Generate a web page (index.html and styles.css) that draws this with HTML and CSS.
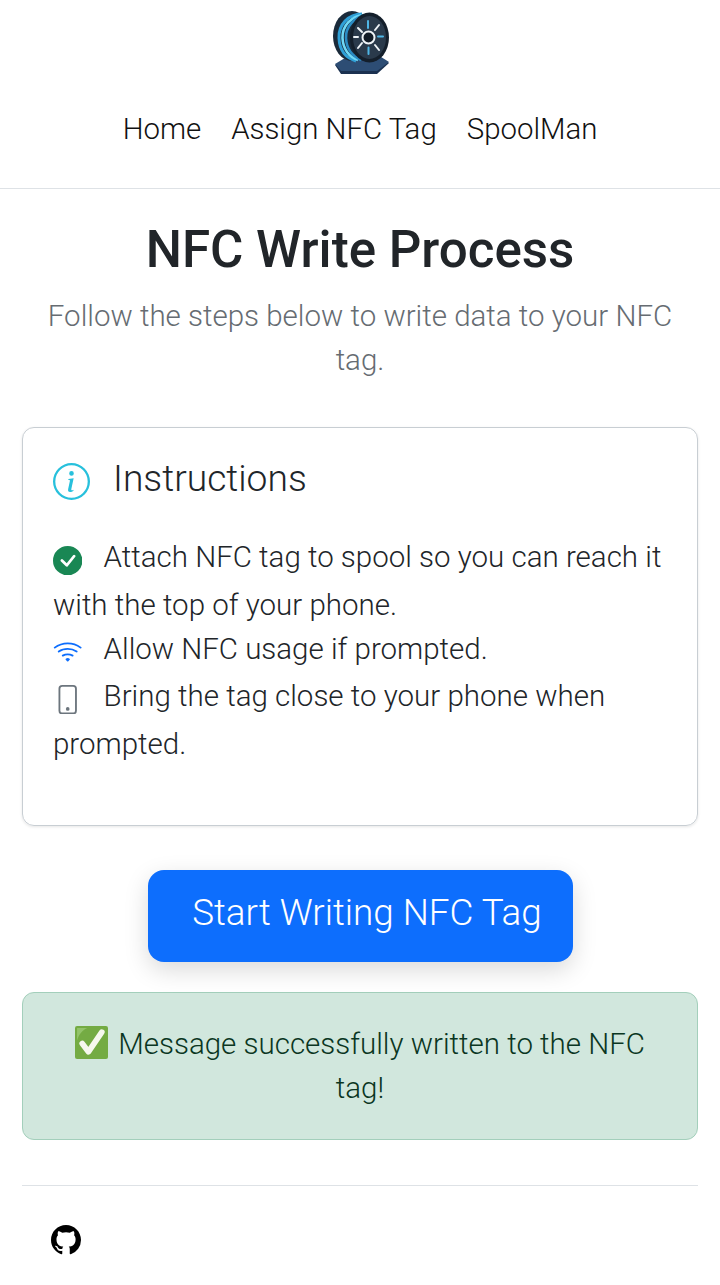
FILE: index.html
```html
<!DOCTYPE html>
<html lang="en">
<head>
  <meta charset="UTF-8" />
  <meta name="viewport" content="width=device-width, initial-scale=1.0"/>
  <title>NFC Write Process</title>
  <link rel="stylesheet" href="styles.css">
</head>
<body>

  <header class="site-header">
    <svg class="logo" viewBox="0 0 80 80" aria-hidden="true">
      <!-- stand -->
      <path d="M15 65 L30 56 H58 L69 63 L57 74 H21 Z" fill="#1b3150"/>
      <path d="M15 64 L30 55 H58 L69 62 L57 71 H21 Z" fill="#2d4d74"/>
      <!-- back flange and coils -->
      <ellipse cx="32" cy="36" rx="19" ry="25" fill="#1a2a3a"/>
      <path d="M42 14 C28 14 18.500 25 19 38 C19.500 50 26 58 36 61" fill="none" stroke="#2f9fd6" stroke-width="3"/>
      <path d="M44 15 C31 16 22 26 22.500 38 C23 49 29 57 38 60" fill="none" stroke="#6fd8f5" stroke-width="2.6"/>
      <path d="M46 15 C34 17 25.500 27 26 38 C26.500 48 32 56 41 60" fill="none" stroke="#2a8cc4" stroke-width="2.6"/>
      <!-- front flange -->
      <ellipse cx="49.500" cy="37.500" rx="19.500" ry="25" fill="#141f2b"/>
      <ellipse cx="49.500" cy="37.500" rx="16.500" ry="21.500" fill="#2a3a4b"/>
      <circle cx="48.5" cy="37.5" r="6" fill="#121c27" stroke="#eef3f7" stroke-width="2"/>
      <g stroke-width="2" stroke-linecap="round">
        <path d="M48 21 V28 M48.500 47.500 V54 M58 36.500 H63" stroke="#4fb6e6"/>
        <path d="M38 28 L42 32 M59 25 L55 30 M38 48 L42 43 M55 45 L59 50 M34 37 H38" stroke="#eef3f7"/>
      </g>
    </svg>
    <nav class="site-nav">
      <a href="#">Home</a>
      <a href="#">Assign NFC Tag</a>
      <a href="#">SpoolMan</a>
    </nav>
  </header>

  <main class="page">
    <h1>NFC Write Process</h1>
    <p class="lead">Follow the steps below to write data to your NFC tag.</p>

    <section class="card">
      <h2 class="card-title">
        <svg class="icon-title" viewBox="0 0 16 16" fill="#27c0dc" aria-hidden="true">
          <path d="M8 15A7 7 0 1 1 8 1a7 7 0 0 1 0 14zm0 1A8 8 0 1 0 8 0a8 8 0 0 0 0 16z"/>
          <path d="m8.93 6.588-2.29.287-.082.38.45.083c.294.07.352.176.288.469l-.738 3.468c-.194.897.105 1.319.808 1.319.545 0 1.178-.252 1.465-.598l.088-.416c-.2.176-.492.246-.686.246-.275 0-.375-.193-.304-.533L8.93 6.588zM9 4.5a1 1 0 1 1-2 0 1 1 0 0 1 2 0z"/>
        </svg>
        Instructions
      </h2>
      <p class="step">
        <svg class="icon-step" viewBox="0 0 16 16" fill="#198754" aria-hidden="true">
          <path d="M16 8A8 8 0 1 1 0 8a8 8 0 0 1 16 0zm-3.97-3.03a.75.75 0 0 0-1.08.022L7.477 9.417 5.384 7.323a.75.75 0 0 0-1.06 1.06L6.97 11.03a.75.75 0 0 0 1.079-.02l3.992-4.99a.75.75 0 0 0-.01-1.05z"/>
        </svg>
        Attach NFC tag to spool so you can reach it with the top of your phone.
      </p>
      <p class="step">
        <svg class="icon-step" viewBox="0 0 16 16" fill="#0d6efd" aria-hidden="true">
          <path d="M15.384 6.115a.485.485 0 0 0-.047-.736A12.444 12.444 0 0 0 8 3C5.259 3 2.723 3.882.663 5.379a.485.485 0 0 0-.048.736.518.518 0 0 0 .668.05A11.448 11.448 0 0 1 8 4c2.507 0 4.827.802 6.716 2.164.205.148.49.13.668-.049z"/>
          <path d="M13.229 8.271a.482.482 0 0 0-.063-.745A9.455 9.455 0 0 0 8 6c-1.905 0-3.68.56-5.166 1.526a.48.48 0 0 0-.063.745.525.525 0 0 0 .652.065A8.46 8.46 0 0 1 8 7a8.46 8.46 0 0 1 4.576 1.336c.206.132.48.108.653-.065zm-2.183 2.183c.226-.226.185-.605-.1-.75A6.473 6.473 0 0 0 8 9c-1.06 0-2.062.254-2.946.704-.285.145-.326.524-.1.75l.015.015c.16.16.407.19.611.09A5.478 5.478 0 0 1 8 10c.868 0 1.69.201 2.42.56.203.1.45.07.61-.091l.016-.015zM9.06 12.44c.196-.196.198-.52-.04-.66A1.99 1.99 0 0 0 8 11.5a1.99 1.99 0 0 0-1.02.28c-.238.14-.236.464-.04.66l.706.706a.5.5 0 0 0 .707 0l.707-.707z"/>
        </svg>
        Allow NFC usage if prompted.
      </p>
      <p class="step">
        <svg class="icon-step" viewBox="0 0 16 16" fill="#6c757d" aria-hidden="true">
          <path d="M11 1a1 1 0 0 1 1 1v12a1 1 0 0 1-1 1H5a1 1 0 0 1-1-1V2a1 1 0 0 1 1-1h6zM5 0a2 2 0 0 0-2 2v12a2 2 0 0 0 2 2h6a2 2 0 0 0 2-2V2a2 2 0 0 0-2-2H5z"/>
          <path d="M8 14a1 1 0 1 0 0-2 1 1 0 0 0 0 2z"/>
        </svg>
        Bring the tag close to your phone when prompted.
      </p>
    </section>

    <div class="action">
      <button class="btn-start" type="button">Start Writing NFC Tag</button>
    </div>

    <div class="alert-success">
      <svg class="icon-done" viewBox="0 0 32 32" aria-hidden="true">
        <rect x="0" y="0" width="32" height="32" rx="2" fill="#74ab43"/>
        <path d="M2 2 H12 C7 4 4 8 2 14 Z" fill="#93c36a"/>
        <path d="M7 17 L13 25 L26 6" fill="none" stroke="#f6f8ee" stroke-width="5.5" stroke-linecap="round" stroke-linejoin="round"/>
      </svg>
      Message successfully written to the NFC tag!
    </div>

    <footer class="site-footer">
      <a class="github-link" href="#" aria-label="GitHub">
        <svg viewBox="0 0 16 16" fill="#000" aria-hidden="true">
          <path d="M8 0C3.58 0 0 3.58 0 8c0 3.54 2.29 6.53 5.47 7.59.4.07.55-.17.55-.38 0-.19-.01-.82-.01-1.49-2.01.37-2.53-.49-2.69-.94-.09-.23-.48-.94-.82-1.13-.28-.15-.68-.52-.01-.53.63-.01 1.08.58 1.23.82.72 1.21 1.87.87 2.33.66.07-.52.28-.87.51-1.07-1.78-.2-3.64-.89-3.64-3.95 0-.87.31-1.59.82-2.15-.08-.2-.36-1.02.08-2.12 0 0 .67-.21 2.2.82.64-.18 1.32-.27 2-.27.68 0 1.36.09 2 .27 1.53-1.04 2.2-.82 2.2-.82.44 1.1.16 1.92.08 2.12.51.56.82 1.27.82 2.15 0 3.07-1.87 3.75-3.65 3.95.29.25.54.73.54 1.48 0 1.07-.01 1.93-.01 2.2 0 .21.15.46.55.38A8.012 8.012 0 0 0 16 8c0-4.42-3.58-8-8-8z"/>
        </svg>
      </a>
    </footer>
  </main>

</body>
</html>
```

FILE: styles.css
```css
* {
  box-sizing: border-box;
  margin: 0;
  padding: 0;
  font-family: Roboto, 'Liberation Sans', sans-serif;
}

body {
  background-color: #fff;
  color: #212529;
}

.site-header {
  display: flex;
  flex-direction: column;
  align-items: center;
  height: 189px;
  border-bottom: 1px solid #dee2e6;
}

.logo {
  width: 80px;
  height: 80px;
}

.site-nav {
  display: flex;
  gap: 30px;
  margin-top: 32px;
}

.site-nav a {
  color: #111;
  font-size: 29.4px;
  font-weight: 300;
  line-height: 34px;
  text-decoration: none;
}

.page {
  padding: 31px 22px 0;
}

h1 {
  font-size: 51.1px;
  font-weight: 500;
  line-height: 60px;
  text-align: center;
}

.lead {
  margin-top: 14px;
  color: #666c72;
  font-size: 29.5px;
  font-weight: 300;
  line-height: 44px;
  text-align: center;
}

.card {
  height: 399px;
  margin-top: 45px;
  padding: 29px 30px 30px;
  border: 1px solid #c8ced3;
  border-radius: 12px;
  box-shadow: 0 1px 3px rgba(0, 0, 0, 0.1);
}

.card-title {
  display: flex;
  align-items: center;
  gap: 23px;
  font-size: 37.2px;
  font-weight: 300;
  line-height: 43px;
}

.icon-title {
  width: 37px;
  height: 37px;
  margin-top: 6px;
}

.step {
  font-size: 29.5px;
  font-weight: 300;
  line-height: 44px;
}

.card-title + .step {
  margin-top: 35px;
}

.icon-step {
  width: 29.4px;
  height: 29.4px;
  margin-right: 14px;
  margin-bottom: 7.5px;
  vertical-align: -15.5px;
}

.action {
  display: flex;
  justify-content: center;
  margin-top: 44px;
}

.btn-start {
  width: 425px;
  height: 92px;
  padding-left: 14px;
  padding-bottom: 7px;
  border: none;
  border-radius: 16px;
  background-color: #0d6efd;
  color: #fff;
  font-size: 36.8px;
  font-weight: 300;
  box-shadow: 0 8px 24px rgba(0, 0, 0, 0.15);
}

.alert-success {
  margin-top: 30px;
  padding: 29px 30px;
  border: 1px solid #a3cfbb;
  border-radius: 12px;
  background-color: #d1e7dd;
  color: #0a3622;
  font-size: 29.5px;
  font-weight: 300;
  line-height: 44px;
  text-align: center;
}

.icon-done {
  width: 33px;
  height: 33px;
  margin-right: 3px;
  vertical-align: -5px;
}

.site-footer {
  margin-top: 45px;
  padding: 39px 29px 0;
  border-top: 1px solid #dee2e6;
}

.github-link {
  display: block;
  width: 30px;
  height: 30px;
}

.github-link svg {
  display: block;
  width: 30px;
  height: 30px;
}
```
